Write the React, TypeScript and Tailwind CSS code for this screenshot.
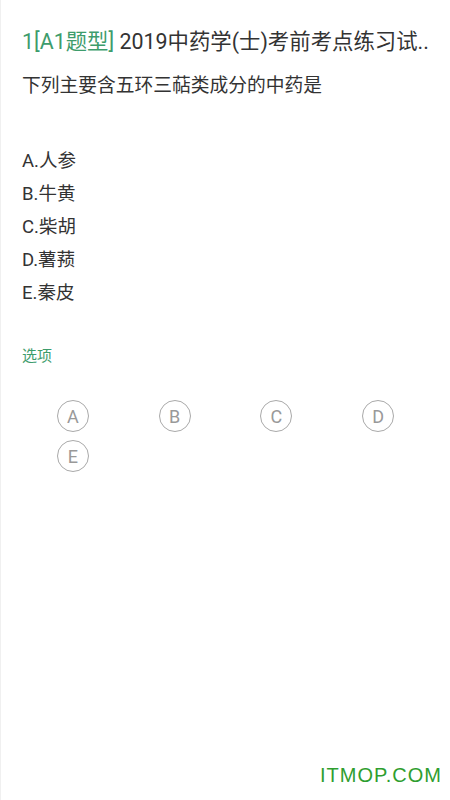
import React from "react";

const font = { fontFamily: 'Roboto, "Noto Sans CJK SC", sans-serif' };

export default function App() {
  const options = ["A.人参", "B.牛黄", "C.柴胡", "D.薯蓣", "E.秦皮"];
  const letters = ["A", "B", "C", "D", "E"];
  return (
    <div className="relative w-[450px] h-[800px] bg-white border-l border-[#f0f0f0] overflow-hidden" style={font}>
      <div className="px-[21px]">
        <div className="mt-[28px] text-[21.4px] leading-[28px] text-[#333] whitespace-nowrap">
          <span className="text-[#3d9c6c]">1[A1题型]</span> 2019中药学(士)考前考点练习试..
        </div>
        <div className="mt-[16px] text-[18.75px] leading-[28px] text-[#333]">下列主要含五环三萜类成分的中药是</div>
        <div className="mt-[45px] flex flex-col">
          {options.map((o) => (
            <div key={o} className="text-[18.5px] leading-[33px] text-[#333]">{o}</div>
          ))}
        </div>
        <div className="mt-[36px] text-[15px] leading-[20px] text-[#3d9c6c]">选项</div>
        <div className="mt-[34px] grid grid-cols-4 gap-y-[8px]">
          {letters.map((l) => (
            <div key={l} className="flex justify-center">
              <div className="w-[32px] h-[32px] rounded-full border-[1.5px] border-[#a9a9a9] flex items-center justify-center text-[18px] font-normal text-[#999]">
                {l}
              </div>
            </div>
          ))}
        </div>
      </div>
      <div
        className="absolute right-[8px] top-[762px] text-[20px] leading-[26px] tracking-[1px] text-[#2f9e2f]"
        style={{ fontFamily: '"Liberation Sans", Arial, sans-serif' }}
      >
        ITMOP.COM
      </div>
    </div>
  );
}
